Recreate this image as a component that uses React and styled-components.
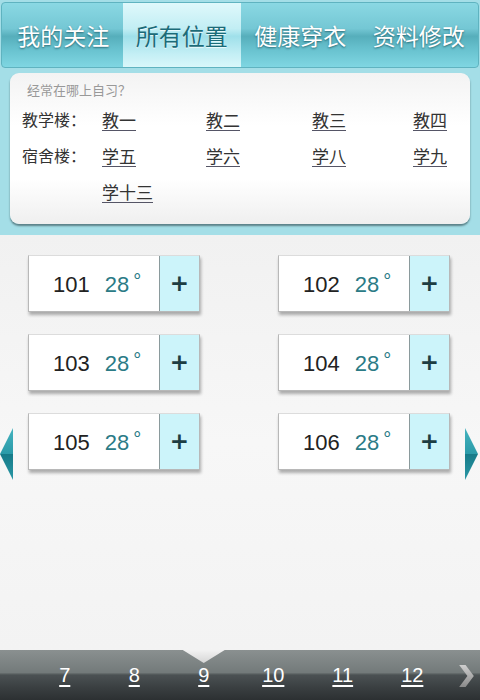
import React from "react";
import styled, { createGlobalStyle } from "styled-components";

const GlobalStyle = createGlobalStyle`
  body {
    margin: 0;
    background: #f4f4f4;
    font-family: "Liberation Sans", "Noto Sans CJK SC", sans-serif;
  }
`;

const tabs = ["我的关注", "所有位置", "健康穿衣", "资料修改"];
const placeRows = [
  { label: "教学楼：", items: ["教一", "教二", "教三", "教四"] },
  { label: "宿舍楼：", items: ["学五", "学六", "学八", "学九"] },
  { label: "", items: ["学十三"] },
];
const rooms = ["101", "102", "103", "104", "105", "106"];
const pages = [7, 8, 9, 10, 11, 12];
const currentPage = 9;

const App = () => {
  return (
    <Page>
      <GlobalStyle />
      <Header>
        <TabBar>
          {tabs.map((t, i) => (
            <Tab key={t} $active={i === 1}>{t}</Tab>
          ))}
        </TabBar>
        <StudyCard>
          <Question>经常在哪上自习？</Question>
          <PlaceGrid>
            {placeRows.map((row, r) => (
              <React.Fragment key={r}>
                <PlaceLabel>{row.label}</PlaceLabel>
                {row.items.map((item) => (
                  <PlaceLink key={item}>{item}</PlaceLink>
                ))}
                {row.items.length < 4 &&
                  Array.from({ length: 4 - row.items.length }).map((_, k) => <span key={"e" + k} />)}
              </React.Fragment>
            ))}
          </PlaceGrid>
        </StudyCard>
      </Header>
      <Main>
        <RoomGrid>
          {rooms.map((room) => (
            <RoomCard key={room}>
              <RoomInfo>
                <RoomNo>{room}</RoomNo>
                <Temp>28<Deg>°</Deg></Temp>
              </RoomInfo>
              <AddButton>+</AddButton>
            </RoomCard>
          ))}
        </RoomGrid>
        <Arrow $side="left" />
        <Arrow $side="right" />
      </Main>
      <Pager>
        <Pointer style={{ left: 30 + (pages.indexOf(currentPage) + 0.5) * 69.5 - 21 }} />
        {pages.map((p) => (
          <PageNum key={p}>{p}</PageNum>
        ))}
        <NextIcon viewBox="0 0 18 24">
          <defs>
            <linearGradient id="chev" x1="0" y1="0" x2="0" y2="1">
              <stop offset="0" stopColor="#cfcfcf" />
              <stop offset="1" stopColor="#8a8a8a" />
            </linearGradient>
          </defs>
          <polygon points="1,0 8,0 17,12 8,24 1,24 10,12" fill="url(#chev)" />
        </NextIcon>
      </Pager>
    </Page>
  );
};

const Page = styled.div`
  width: 480px;
  height: 700px;
  display: flex;
  flex-direction: column;
  overflow: hidden;
`;

const Header = styled.div`
  background: #a4dee7;
  padding: 2px 1px 11px;
  height: 235px;
  box-sizing: border-box;
`;

const TabBar = styled.div`
  display: flex;
  height: 66px;
  box-sizing: border-box;
  border: 1px solid #5fb3c0;
  border-radius: 4px;
  overflow: hidden;
  padding-left: 2px;
  background: linear-gradient(
    to bottom,
    #8ad8e3 0%,
    #74c7d4 40%,
    #56aebb 52%,
    #66c0cd 70%,
    #7fd6e2 100%
  );
`;

const Tab = styled.div`
  flex: 1;
  display: flex;
  align-items: center;
  justify-content: center;
  font-family: "Noto Sans CJK SC", sans-serif;
  font-size: 23px;
  color: ${(p) => (p.$active ? "#1b6b78" : "#ffffff")};
  text-shadow: ${(p) =>
    p.$active ? "0 1px 1px rgba(255,255,255,0.8)" : "0 1px 2px rgba(0,50,60,0.6)"};
  background: ${(p) =>
    p.$active
      ? "linear-gradient(to bottom, #dff8fb 0%, #c2eef4 40%, #9fe0ea 52%, #c4eff5 80%, #d9f7fa 100%)"
      : "transparent"};
`;

const StudyCard = styled.div`
  margin: 5px 9px 0;
  height: 151px;
  box-sizing: border-box;
  padding: 7px 12px 12px;
  border-radius: 9px;
  background: linear-gradient(to bottom, #f3f3f3 0%, #ffffff 35%, #ffffff 70%, #efefef 100%);
  box-shadow: 0 2px 2px rgba(60, 90, 95, 0.7);
`;

const Question = styled.div`
  font-family: "Noto Sans CJK SC", sans-serif;
  font-size: 13px;
  line-height: 20px;
  color: #999;
  padding-left: 5px;
  margin-bottom: 1px;
`;

const PlaceGrid = styled.div`
  display: grid;
  grid-template-columns: 80px 104px 106px 101px auto;
  grid-auto-rows: 36px;
  align-items: center;
`;

const PlaceLabel = styled.span`
  font-family: "Noto Sans CJK SC", sans-serif;
  font-size: 16px;
  color: #333;
`;

const PlaceLink = styled.a`
  font-family: "Noto Sans CJK SC", sans-serif;
  font-size: 17px;
  color: #333;
  text-decoration: underline;
  text-decoration-color: #556;
  text-underline-offset: 3px;
  cursor: pointer;
`;

const Main = styled.div`
  position: relative;
  height: 415px;
  background: linear-gradient(to bottom, #f1f1f1 0%, #f7f7f7 50%, #f3f3f3 100%);
  padding: 20px 0 0 28px;
  box-sizing: border-box;
`;

const RoomGrid = styled.div`
  display: grid;
  grid-template-columns: repeat(2, 172px);
  column-gap: 78px;
  row-gap: 22px;
`;

const RoomCard = styled.div`
  display: flex;
  height: 57px;
  box-sizing: border-box;
  border: 1px solid #b8b8b8;
  border-top-color: #dcdcdc;
  box-shadow: 1px 3px 3px rgba(0, 0, 0, 0.3);
`;

const RoomInfo = styled.div`
  width: 130px;
  background: #fff;
  padding-left: 24px;
  box-sizing: border-box;
  line-height: 50px;
  white-space: nowrap;
  font-family: "Liberation Sans", sans-serif;
  font-size: 22px;
`;

const RoomNo = styled.span`
  color: #222;
  margin-right: 15px;
`;

const Temp = styled.span`
  color: #2b7b86;
`;

const Deg = styled.span`
  font-size: 20px;
  vertical-align: 4px;
  margin-left: 4px;
`;

const AddButton = styled.div`
  flex: 1;
  background: #ccf4fa;
  border-left: 1px solid #8a9a9c;
  display: flex;
  align-items: center;
  justify-content: center;
  font-family: "DejaVu Sans", sans-serif;
  font-weight: bold;
  font-size: 23px;
  color: #1d3d42;
  padding-bottom: 2px;
`;

const Arrow = styled.div`
  position: absolute;
  top: 193px;
  ${(p) => (p.$side === "left" ? "left: 0;" : "right: 2px;")}
  width: 13px;
  height: 52px;
  background: linear-gradient(to bottom, #45b3bf 0%, #2a9aa8 50%, #167a88 50%, #2a98a6 100%);
  clip-path: ${(p) =>
    p.$side === "left"
      ? "polygon(100% 0, 0 50%, 100% 100%)"
      : "polygon(0 0, 100% 50%, 0 100%)"};
`;

const Pager = styled.div`
  position: relative;
  height: 50px;
  display: flex;
  align-items: center;
  padding-left: 30px;
  background: linear-gradient(
    to bottom,
    #8a9090 0%,
    #737a7a 45%,
    #4b5153 50%,
    #3a3f41 75%,
    #2c3032 100%
  );
`;

const Pointer = styled.div`
  position: absolute;
  top: 0;
  width: 42px;
  height: 13px;
  background: linear-gradient(to bottom, #f2f2f2, #d6d6d6);
  clip-path: polygon(0 0, 100% 0, 50% 100%);
`;

const PageNum = styled.a`
  width: 69.5px;
  text-align: center;
  font-family: "Liberation Sans", sans-serif;
  font-size: 20px;
  color: #fff;
  text-decoration: underline;
  text-underline-offset: 3px;
  cursor: pointer;
`;

const NextIcon = styled.svg`
  position: absolute;
  right: 5px;
  top: 15px;
  width: 17px;
  height: 22px;
`;

export default App;
